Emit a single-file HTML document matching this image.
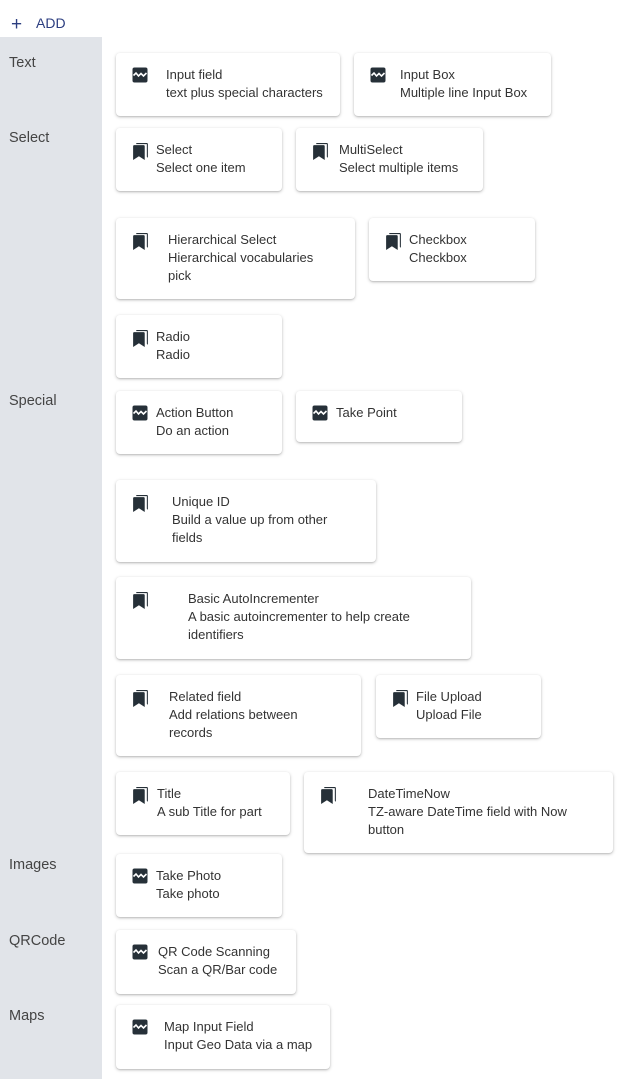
<!DOCTYPE html>
<html><head><meta charset="utf-8"><style>
*{margin:0;padding:0;box-sizing:border-box}
body{width:622px;height:1079px;background:#fff;font-family:"Liberation Sans",sans-serif;position:relative;overflow:hidden;color:#333}
.side{position:absolute;left:0;top:37px;width:102px;height:1042px;background:#e1e4e9}
.lab{position:absolute;left:9px;font-size:14.5px;color:#444}
.c{position:absolute;background:#fff;border-radius:4px;box-shadow:0 1px 3px rgba(0,0,0,.25),0 1px 1px rgba(0,0,0,.08)}
.c svg{position:absolute;left:16px;top:14px}
.t{position:absolute;top:13px;font-size:13px;line-height:18px;color:#333}
.add{position:absolute;left:11px;top:13px;font-size:14px;color:#2c3e80}
</style></head><body>
<svg width="0" height="0" style="position:absolute"><defs>
<symbol id="w" viewBox="0 0 16 16"><rect x="0.5" y="0.5" width="15" height="15" rx="2" fill="#263038"/><path d="M1.5 8.5 L4 6 L6.5 9 L9 6.5 L11.5 9 L14.5 6" stroke="#fff" stroke-width="1.6" fill="none"/></symbol>
<symbol id="b" viewBox="0 0 16 18"><path d="M4 1 H14 Q15 1 15 2 V15 L14 14 V2 H4 Z" fill="#263038"/><path d="M1 4 Q1 3 2 3 H11 Q12 3 12 4 V17 L6.5 13.5 L1 17 Z" fill="#263038"/></symbol>
</defs></svg>
<div class="add"><span style="font-size:19px;position:relative;top:1px">+</span><span style="position:absolute;left:25px;top:2px">ADD</span></div>
<div class="side"></div>
<div class="lab" style="top:55px">Text</div>
<div class="lab" style="top:130px">Select</div>
<div class="lab" style="top:393px">Special</div>
<div class="lab" style="top:857px">Images</div>
<div class="lab" style="top:933px">QRCode</div>
<div class="lab" style="top:1008px">Maps</div>

<div class="c" style="left:116px;top:53px;width:224px;height:63px"><svg width="16" height="16"><use href="#w"/></svg><div class="t" style="left:50px">Input field<br>text plus special characters</div></div>
<div class="c" style="left:354px;top:53px;width:197px;height:63px"><svg width="16" height="16"><use href="#w"/></svg><div class="t" style="left:46px">Input Box<br>Multiple line Input Box</div></div>
<div class="c" style="left:116px;top:128px;width:166px;height:63px"><svg width="17" height="19"><use href="#b"/></svg><div class="t" style="left:40px">Select<br>Select one item</div></div>
<div class="c" style="left:296px;top:128px;width:187px;height:63px"><svg width="17" height="19"><use href="#b"/></svg><div class="t" style="left:43px">MultiSelect<br>Select multiple items</div></div>
<div class="c" style="left:116px;top:218px;width:239px;height:81px"><svg width="17" height="19"><use href="#b"/></svg><div class="t" style="left:52px">Hierarchical Select<br>Hierarchical vocabularies<br>pick</div></div>
<div class="c" style="left:369px;top:218px;width:166px;height:63px"><svg width="17" height="19"><use href="#b"/></svg><div class="t" style="left:40px">Checkbox<br>Checkbox</div></div>
<div class="c" style="left:116px;top:315px;width:166px;height:63px"><svg width="17" height="19"><use href="#b"/></svg><div class="t" style="left:40px">Radio<br>Radio</div></div>
<div class="c" style="left:116px;top:391px;width:166px;height:63px"><svg width="16" height="16"><use href="#w"/></svg><div class="t" style="left:40px">Action Button<br>Do an action</div></div>
<div class="c" style="left:296px;top:391px;width:166px;height:51px"><svg width="16" height="16"><use href="#w"/></svg><div class="t" style="left:40px">Take Point</div></div>
<div class="c" style="left:116px;top:480px;width:260px;height:82px"><svg width="17" height="19"><use href="#b"/></svg><div class="t" style="left:56px">Unique ID<br>Build a value up from other<br>fields</div></div>
<div class="c" style="left:116px;top:577px;width:355px;height:82px"><svg width="17" height="19"><use href="#b"/></svg><div class="t" style="left:72px">Basic AutoIncrementer<br>A basic autoincrementer to help create<br>identifiers</div></div>
<div class="c" style="left:116px;top:675px;width:245px;height:81px"><svg width="17" height="19"><use href="#b"/></svg><div class="t" style="left:53px">Related field<br>Add relations between<br>records</div></div>
<div class="c" style="left:376px;top:675px;width:165px;height:63px"><svg width="17" height="19"><use href="#b"/></svg><div class="t" style="left:40px">File Upload<br>Upload File</div></div>
<div class="c" style="left:116px;top:772px;width:174px;height:63px"><svg width="17" height="19"><use href="#b"/></svg><div class="t" style="left:41px">Title<br>A sub Title for part</div></div>
<div class="c" style="left:304px;top:772px;width:309px;height:81px"><svg width="17" height="19"><use href="#b"/></svg><div class="t" style="left:64px">DateTimeNow<br>TZ-aware DateTime field with Now<br>button</div></div>
<div class="c" style="left:116px;top:854px;width:166px;height:63px"><svg width="16" height="16"><use href="#w"/></svg><div class="t" style="left:40px">Take Photo<br>Take photo</div></div>
<div class="c" style="left:116px;top:930px;width:180px;height:64px"><svg width="16" height="16"><use href="#w"/></svg><div class="t" style="left:42px">QR Code Scanning<br>Scan a QR/Bar code</div></div>
<div class="c" style="left:116px;top:1005px;width:214px;height:64px"><svg width="16" height="16"><use href="#w"/></svg><div class="t" style="left:48px">Map Input Field<br>Input Geo Data via a map</div></div>
</body></html>
